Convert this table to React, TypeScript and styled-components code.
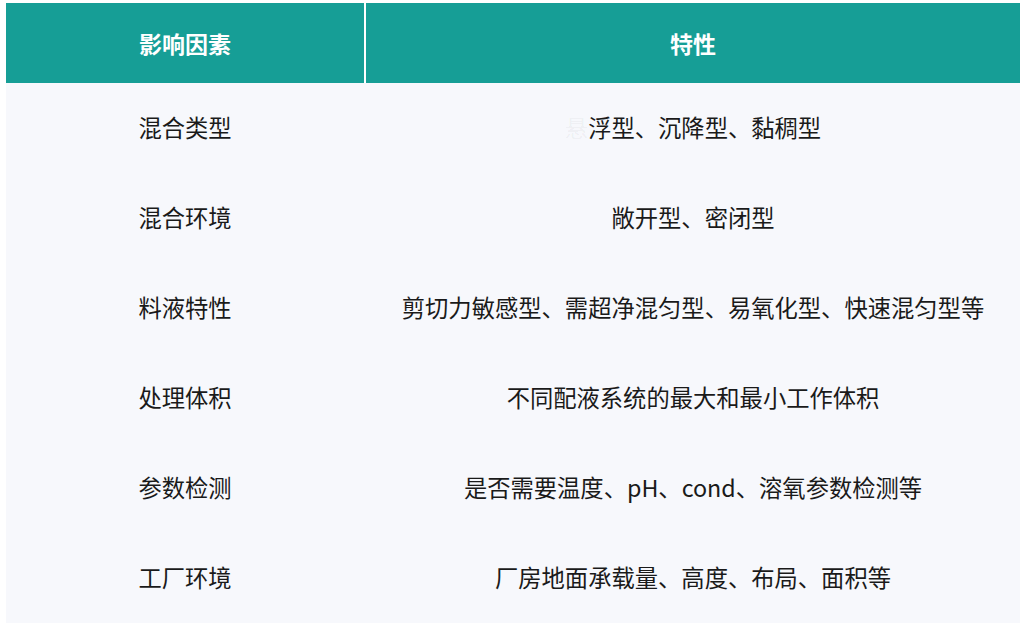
import React from 'react';
import styled, { createGlobalStyle } from 'styled-components';

const GlobalStyle = createGlobalStyle`
    html, body {
        margin: 0;
        padding: 0;
        background: #ffffff;
    }
`;

const Page = styled.div`
    padding: 3px 0 0 6px;
    width: 1020px;
    height: 628px;
    box-sizing: border-box;
    overflow: hidden;
    font-family: "Noto Sans CJK SC", "Noto Sans", sans-serif;
`;

const Table = styled.div`
    display: grid;
    grid-template-columns: 358px 2px 654px;
    width: 1014px;
`;

const HeadCell = styled.div`
    height: 80px;
    display: flex;
    align-items: center;
    justify-content: center;
    background: #169e96;
    color: #ffffff;
    font-size: 23px;
    font-weight: 700;
`;

const Divider = styled.div<{ head?: boolean }>`
    background: ${props => props.head ? '#ffffff' : '#f7f8fc'};
`;

const Cell = styled.div`
    height: 90px;
    display: flex;
    align-items: center;
    justify-content: center;
    background: #f7f8fc;
    color: #1a1a1a;
    font-size: 23.3px;
    padding-bottom: 3px;
    box-sizing: border-box;
`;

const Faded = styled.span`
    color: rgba(0, 0, 0, 0.05);
`;

const rows: [string, React.ReactNode][] = [
    ['混合类型', <><Faded>悬</Faded>浮型、沉降型、黏稠型</>],
    ['混合环境', '敞开型、密闭型'],
    ['料液特性', '剪切力敏感型、需超净混匀型、易氧化型、快速混匀型等'],
    ['处理体积', '不同配液系统的最大和最小工作体积'],
    ['参数检测', '是否需要温度、pH、cond、溶氧参数检测等'],
    ['工厂环境', '厂房地面承载量、高度、布局、面积等'],
];

export default function App() {
    return (
        <Page>
            <GlobalStyle />
            <Table>
                <HeadCell>影响因素</HeadCell>
                <Divider head />
                <HeadCell>特性</HeadCell>
                {rows.map(([factor, trait]) => (
                    <React.Fragment key={factor}>
                        <Cell>{factor}</Cell>
                        <Divider />
                        <Cell>{trait}</Cell>
                    </React.Fragment>
                ))}
            </Table>
        </Page>
    );
}
